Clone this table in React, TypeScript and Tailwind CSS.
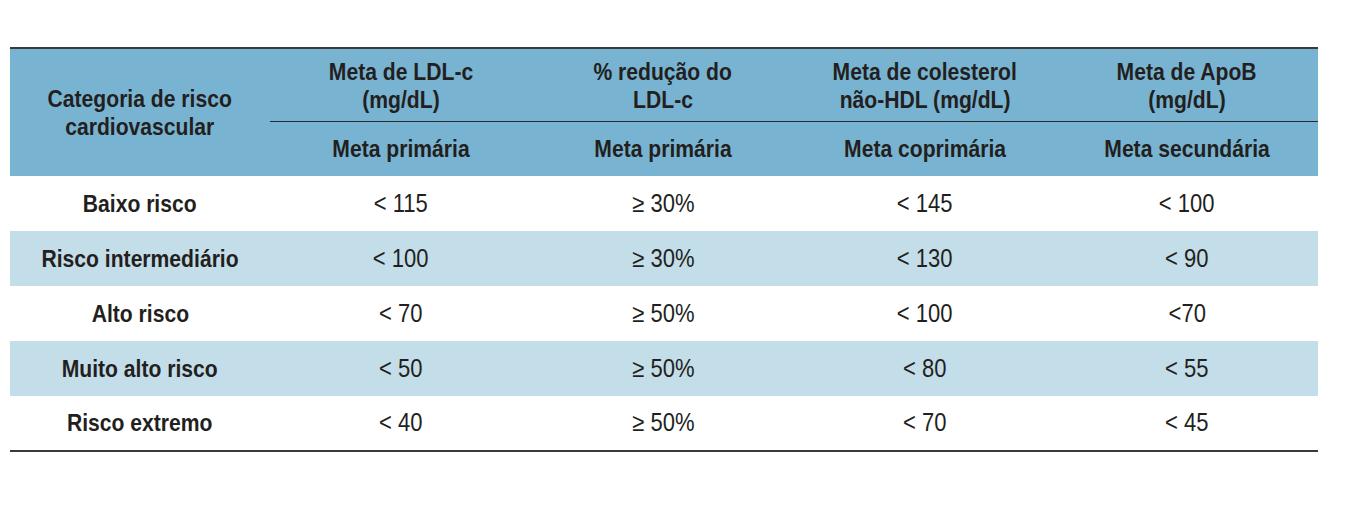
const HEAD = [
  ['Meta de LDL-c', '(mg/dL)'],
  ['% redução do', 'LDL-c'],
  ['Meta de colesterol', 'não-HDL (mg/dL)'],
  ['Meta de ApoB', '(mg/dL)'],
]
const SUB = ['Meta primária', 'Meta primária', 'Meta coprimária', 'Meta secundária']

const ROWS: [string, string, string, string, string][] = [
  ['Baixo risco', '< 115', '≥ 30%', '< 145', '< 100'],
  ['Risco intermediário', '< 100', '≥ 30%', '< 130', '< 90'],
  ['Alto risco', '< 70', '≥ 50%', '< 100', '<70'],
  ['Muito alto risco', '< 50', '≥ 50%', '< 80', '< 55'],
  ['Risco extremo', '< 40', '≥ 50%', '< 70', '< 45'],
]

// condensed look: Liberation Sans squeezed horizontally
function Narrow({ children }: { children: React.ReactNode }) {
  return <span className="inline-block origin-center scale-x-[0.88] whitespace-nowrap">{children}</span>
}

export default function App() {
  return (
    <div className="h-[516px] w-[1360px] bg-white pt-[47px] pl-[10px]">
      <table className="w-[1308px] table-fixed border-collapse font-['Liberation_Sans',Arial,sans-serif] text-[#231f20]">
        <colgroup>
          <col className="w-[260px]" />
          <col className="w-[262px]" />
          <col className="w-[262px]" />
          <col className="w-[262px]" />
          <col className="w-[262px]" />
        </colgroup>
        <thead>
          <tr className="h-[73px] border-t-2 border-[#3a3a3a] bg-[#78b4d1]">
            <th rowSpan={2} className="px-1 text-center text-[24px] leading-[28px] font-bold">
              <Narrow>Categoria de risco</Narrow>
              <br />
              <Narrow>cardiovascular</Narrow>
            </th>
            {HEAD.map(([a, b]) => (
              <th key={a} className="border-b border-[#2a2a2a] px-1 pt-[2px] text-center text-[24px] leading-[28px] font-bold">
                <Narrow>{a}</Narrow>
                <br />
                <Narrow>{b}</Narrow>
              </th>
            ))}
          </tr>
          <tr className="h-[55px] bg-[#78b4d1]">
            {SUB.map((s, i) => (
              <th key={i} className="px-1 text-center text-[24px] font-bold">
                <Narrow>{s}</Narrow>
              </th>
            ))}
          </tr>
        </thead>
        <tbody className="border-b-2 border-[#3a3a3a]">
          {ROWS.map((r, i) => (
            <tr key={r[0]} className={`h-[55px] ${i % 2 === 1 ? 'bg-[#c3dde9]' : 'bg-white'}`}>
              <td className="text-center text-[24px] font-bold">
                <Narrow>{r[0]}</Narrow>
              </td>
              {r.slice(1).map((v, j) => (
                <td key={j} className="text-center text-[25px]">
                  <Narrow>{v}</Narrow>
                </td>
              ))}
            </tr>
          ))}
        </tbody>
      </table>
    </div>
  )
}
